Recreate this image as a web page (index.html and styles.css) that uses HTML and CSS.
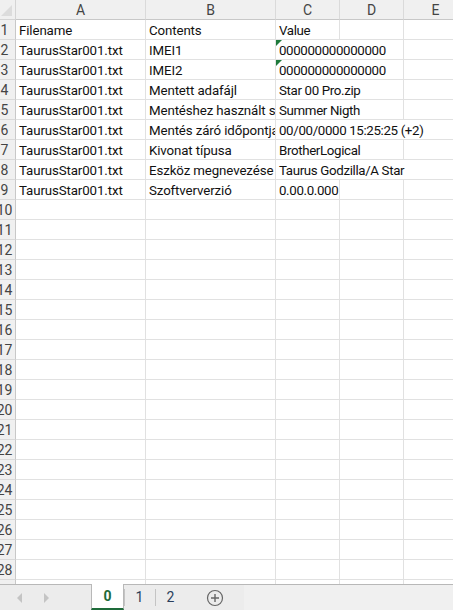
FILE: index.html
```html
<!DOCTYPE html>
<html lang="en">
<head>
    <meta charset="UTF-8">
    <title>TaurusStar001</title>
    <link rel="stylesheet" href="styles.css">
</head>
<body>
    <div class="sheet">
        <div class="grid">
            <div class="corner"></div>
            <div class="colhead">A</div>
            <div class="colhead">B</div>
            <div class="colhead">C</div>
            <div class="colhead">D</div>
            <div class="colhead">E</div>

            <div class="rowhead">1</div>
            <div class="cell">Filename</div>
            <div class="cell">Contents</div>
            <div class="cell val">Value</div>
            <div class="cell"></div>
            <div class="cell"></div>

            <div class="rowhead">2</div>
            <div class="cell">TaurusStar001.txt</div>
            <div class="cell">IMEI1</div>
            <div class="cell val span2 flag">000000000000000</div>
            <div class="cell"></div>

            <div class="rowhead">3</div>
            <div class="cell">TaurusStar001.txt</div>
            <div class="cell">IMEI2</div>
            <div class="cell val span2 flag">000000000000000</div>
            <div class="cell"></div>

            <div class="rowhead">4</div>
            <div class="cell">TaurusStar001.txt</div>
            <div class="cell">Mentett adafájl</div>
            <div class="cell val span2">Star 00 Pro.zip</div>
            <div class="cell"></div>

            <div class="rowhead">5</div>
            <div class="cell">TaurusStar001.txt</div>
            <div class="cell">Mentéshez használt szoftver</div>
            <div class="cell val span2">Summer Nigth</div>
            <div class="cell"></div>

            <div class="rowhead">6</div>
            <div class="cell">TaurusStar001.txt</div>
            <div class="cell">Mentés záró időpontja</div>
            <div class="cell val span3">00/00/0000 15:25:25 (+2)</div>

            <div class="rowhead">7</div>
            <div class="cell">TaurusStar001.txt</div>
            <div class="cell">Kivonat típusa</div>
            <div class="cell val span2">BrotherLogical</div>
            <div class="cell"></div>

            <div class="rowhead">8</div>
            <div class="cell">TaurusStar001.txt</div>
            <div class="cell">Eszköz megnevezése</div>
            <div class="cell val span3">Taurus Godzilla/A Star</div>

            <div class="rowhead">9</div>
            <div class="cell">TaurusStar001.txt</div>
            <div class="cell">Szoftververzió</div>
            <div class="cell val">0.00.0.000</div>
            <div class="cell"></div>
            <div class="cell"></div>
        </div>
        <div class="grid" id="emptyRows"></div>
    </div>

    <div class="tabbar">
        <div class="nav">
            <span class="arrow left"></span>
            <span class="arrow right"></span>
        </div>
        <div class="tab active">0</div>
        <div class="tab">1</div>
        <div class="tab">2</div>
        <div class="add">
            <svg width="18" height="18" viewBox="0 0 18 18">
                <circle cx="9" cy="9" r="7.5" fill="none" stroke="#666" stroke-width="1.2"/>
                <path d="M9 5v8M5 9h8" stroke="#666" stroke-width="1.4"/>
            </svg>
        </div>
        <div class="rest"></div>
    </div>

    <script>
        // Fill the blank rows 10..29
        const grid = document.getElementById('emptyRows');
        for (let r = 10; r <= 29; r++) {
            let html = '<div class="rowhead">' + r + '</div>';
            for (let c = 0; c < 5; c++) html += '<div class="cell"></div>';
            grid.insertAdjacentHTML('beforeend', html);
        }
    </script>
</body>
</html>
```

FILE: styles.css
```css
body {
    margin: 0;
    width: 453px;
    height: 610px;
    overflow: hidden;
    display: flex;
    flex-direction: column;
    font-family: Roboto, sans-serif;
    font-size: 13.3px;
    color: #111;
    background: #fff;
}
.sheet {
    height: 584px;
    overflow: hidden;
}
.grid {
    display: grid;
    grid-template-columns: 22px 130px 130px 64px 64px 64px;
    grid-auto-rows: 20px;
    margin-left: -6px;
    width: 474px;
}
.corner {
    background: #f0f0f0;
    border-right: 1px solid #d4d4d4;
    border-bottom: 1px solid #d4d4d4;
    position: relative;
}
.corner::after {
    content: "";
    position: absolute;
    right: 3px;
    bottom: 3px;
    border-left: 11px solid transparent;
    border-bottom: 11px solid #dcdcdc;
}
.colhead {
    background: #f0f0f0;
    color: #444;
    font-size: 14px;
    text-align: center;
    line-height: 20px;
    border-right: 1px solid #dadada;
    border-bottom: 1px solid #c8c8c8;
}
.rowhead {
    background: #f0f0f0;
    color: #444;
    font-size: 14px;
    text-align: center;
    line-height: 20px;
    border-right: 1px solid #c8c8c8;
    border-bottom: 1px solid #dadada;
    overflow: hidden;
}
.cell {
    line-height: 21px;
    padding-left: 3px;
    white-space: nowrap;
    overflow: hidden;
    letter-spacing: -0.12px;
    border-right: 1px solid #e1e1e1;
    border-bottom: 1px solid #e1e1e1;
}
.val {
    letter-spacing: -0.35px;
}
.span2 {
    grid-column: span 2;
}
.span3 {
    grid-column: span 3;
}
.flag {
    position: relative;
}
.flag::before {
    content: "";
    position: absolute;
    left: 0;
    top: 0;
    border-top: 6px solid #1e7a3c;
    border-right: 6px solid transparent;
}
.tabbar {
    height: 25px;
    display: flex;
    border-top: 1px solid #b8b8b8;
    background: #ececec;
}
.nav {
    width: 91px;
    display: flex;
    align-items: center;
    gap: 22px;
    padding-left: 17px;
    box-sizing: border-box;
}
.arrow {
    width: 0;
    height: 0;
    border-top: 5px solid transparent;
    border-bottom: 5px solid transparent;
}
.arrow.left {
    border-right: 5px solid #c4c4c4;
}
.arrow.right {
    border-left: 5px solid #c4c4c4;
}
.tab {
    width: 31px;
    text-align: center;
    line-height: 24px;
    font-size: 14px;
    color: #2a3e5c;
    position: relative;
}
.tab + .tab::before {
    content: "";
    position: absolute;
    left: 0;
    top: 4px;
    bottom: 4px;
    border-left: 1px solid #c4c4c4;
}
.tab.active {
    background: #fff;
    color: #1e6b3a;
    font-weight: bold;
    margin-top: -1px;
    border-left: 1px solid #b8b8b8;
    border-right: 1px solid #b8b8b8;
    border-bottom: 2px solid #1e6b3a;
    line-height: 24px;
}
.tab:last-of-type::after {
    content: "";
    position: absolute;
    right: -1px;
    top: 4px;
    bottom: 4px;
    border-left: 1px solid #c4c4c4;
}
.add {
    width: 58px;
    display: flex;
    align-items: center;
    justify-content: center;
}
.rest {
    flex: 1;
    background: #f0f0f0;
}
```
